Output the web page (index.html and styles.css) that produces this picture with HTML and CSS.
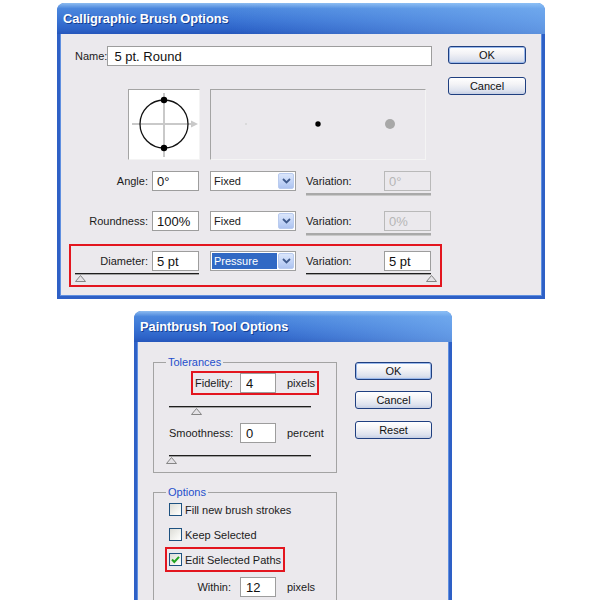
FILE: index.html
```html
<!DOCTYPE html>
<html lang="en">

<head>
	<meta charset="UTF-8">
	<title>Brush Options</title>
	<link rel="stylesheet" href="styles.css">
</head>

<body>
	<div class="dialog brush-dialog">
		<div class="titlebar">Calligraphic Brush Options</div>
		<div class="dialog-body">
			<div class="main">
				<div class="name-row">
					<label for="brushName">Name:</label>
					<input type="text" id="brushName" class="field name-field" value="5 pt. Round">
				</div>
				<div class="preview-row">
					<div class="preview preview-shape">
						<svg width="70" height="69" viewBox="0 0 70 69">
							<line x1="35" y1="3" x2="35" y2="67" stroke="#c9c9c9" stroke-width="2"/>
							<line x1="3" y1="34" x2="63" y2="34" stroke="#c9c9c9" stroke-width="2"/>
							<polygon points="62,30.5 69,34 62,37.5" fill="#c9c9c9"/>
							<circle cx="35" cy="34" r="24" fill="none" stroke="#111" stroke-width="1.3"/>
							<circle cx="35" cy="10" r="3.2" fill="#000"/>
							<circle cx="35" cy="58" r="3.2" fill="#000"/>
						</svg>
					</div>
					<div class="preview preview-strokes">
						<svg width="214" height="69" viewBox="0 0 214 69">
							<circle cx="35" cy="34" r="1" fill="#d4d4d4"/>
							<circle cx="107" cy="34" r="2.7" fill="#000"/>
							<circle cx="179" cy="34" r="5" fill="#a8a8a8"/>
						</svg>
					</div>
				</div>

				<div class="param">
					<div class="pgroup pgroup-left">
						<div class="pline">
							<label for="angle">Angle:</label>
							<input type="text" id="angle" class="field small" value="0°">
						</div>
					</div>
					<div class="select">
						<span class="select-value">Fixed</span>
						<span class="select-arrow"><svg width="9" height="6" viewBox="0 0 9 6"><path d="M1 1 L4.5 4.5 L8 1" fill="none" stroke="#3f5a8c" stroke-width="1.8"/></svg></span>
					</div>
					<div class="pgroup pgroup-right">
						<div class="pline between">
							<span>Variation:</span>
							<input type="text" class="field small" value="0°" disabled>
						</div>
						<div class="track track-off"></div>
					</div>
				</div>

				<div class="param">
					<div class="pgroup pgroup-left">
						<div class="pline">
							<label for="roundness">Roundness:</label>
							<input type="text" id="roundness" class="field small" value="100%">
						</div>
					</div>
					<div class="select">
						<span class="select-value">Fixed</span>
						<span class="select-arrow"><svg width="9" height="6" viewBox="0 0 9 6"><path d="M1 1 L4.5 4.5 L8 1" fill="none" stroke="#3f5a8c" stroke-width="1.8"/></svg></span>
					</div>
					<div class="pgroup pgroup-right">
						<div class="pline between">
							<span>Variation:</span>
							<input type="text" class="field small" value="0%" disabled>
						</div>
						<div class="track track-off"></div>
					</div>
				</div>

				<div class="param param-hl">
					<div class="pgroup pgroup-left">
						<div class="pline">
							<label for="diameter">Diameter:</label>
							<input type="text" id="diameter" class="field small" value="5 pt">
						</div>
						<div class="track"></div>
						<div class="thumb thumb-start"><svg width="11" height="7" viewBox="0 0 11 7"><polygon points="5.5,0.5 10.5,6.5 0.5,6.5" fill="#e4e2e6" stroke="#858585"/></svg></div>
					</div>
					<div class="select">
						<span class="select-value selected">Pressure</span>
						<span class="select-arrow"><svg width="9" height="6" viewBox="0 0 9 6"><path d="M1 1 L4.5 4.5 L8 1" fill="none" stroke="#3f5a8c" stroke-width="1.8"/></svg></span>
					</div>
					<div class="pgroup pgroup-right">
						<div class="pline between">
							<span>Variation:</span>
							<input type="text" class="field small" value="5 pt">
						</div>
						<div class="track"></div>
						<div class="thumb thumb-end"><svg width="11" height="7" viewBox="0 0 11 7"><polygon points="5.5,0.5 10.5,6.5 0.5,6.5" fill="#e4e2e6" stroke="#858585"/></svg></div>
					</div>
				</div>
			</div>
			<div class="buttons">
				<button class="btn btn-default">OK</button>
				<button class="btn">Cancel</button>
			</div>
		</div>
	</div>

	<div class="dialog tool-dialog">
		<div class="titlebar">Paintbrush Tool Options</div>
		<div class="dialog-body tool-body">
			<div class="groups">
				<fieldset class="group">
					<legend>Tolerances</legend>
					<div class="trow trow-hl">
						<label class="tlabel" for="fidelity">Fidelity:</label>
						<input type="text" id="fidelity" class="field tiny" value="4">
						<span class="unit">pixels</span>
					</div>
					<div class="tslider">
						<div class="track"></div>
						<div class="thumb thumb-fidelity"><svg width="11" height="7" viewBox="0 0 11 7"><polygon points="5.5,0.5 10.5,6.5 0.5,6.5" fill="#e4e2e6" stroke="#858585"/></svg></div>
					</div>
					<div class="trow trow-smooth">
						<label class="tlabel" for="smoothness">Smoothness:</label>
						<input type="text" id="smoothness" class="field tiny" value="0">
						<span class="unit">percent</span>
					</div>
					<div class="tslider tslider-last">
						<div class="track"></div>
						<div class="thumb thumb-smooth"><svg width="11" height="7" viewBox="0 0 11 7"><polygon points="5.5,0.5 10.5,6.5 0.5,6.5" fill="#e4e2e6" stroke="#858585"/></svg></div>
					</div>
				</fieldset>

				<fieldset class="group options">
					<legend>Options</legend>
					<div class="checks">
						<label class="check"><span class="box"></span>Fill new brush strokes</label>
						<label class="check"><span class="box"></span>Keep Selected</label>
						<label class="check check-hl"><span class="box"><svg width="11" height="11" viewBox="0 0 11 11"><path d="M2 5.5 L4.3 8 L9 2.8" fill="none" stroke="#21a421" stroke-width="2"/></svg></span>Edit Selected Paths</label>
					</div>
					<div class="trow trow-within">
						<label class="tlabel" for="within">Within:</label>
						<input type="text" id="within" class="field tiny" value="12">
						<span class="unit">pixels</span>
					</div>
				</fieldset>
			</div>
			<div class="buttons tool-buttons">
				<button class="btn btn-default">OK</button>
				<button class="btn">Cancel</button>
				<button class="btn">Reset</button>
			</div>
		</div>
	</div>
</body>

</html>
```

FILE: styles.css
```css
body {
	margin: 0;
	background: #fff;
	font-family: "Liberation Sans", Arial, sans-serif;
	font-size: 11px;
	color: #1b1b1b;
	overflow: hidden;
}

.dialog {
	box-sizing: border-box;
	background: #ebe9ed;
	border: 3px solid #2e60c6;
	border-top: 0;
	border-radius: 8px 8px 0 0;
	box-shadow: inset 1px 0 0 #5f8fe0, inset -1px 0 0 #5f8fe0, inset 0 -1px 0 #5f8fe0;
}

.brush-dialog {
	width: 488px;
	margin: 3px 0 0 57px;
}

.tool-dialog {
	width: 318px;
	margin: 12px 0 0 134px;
	padding-bottom: 30px;
}

.titlebar {
	margin: 0 -3px;
	height: 31px;
	line-height: 31px;
	padding-left: 6px;
	border-radius: 7px 7px 0 0;
	background:
		linear-gradient(to right, rgba(140, 195, 250, 0) 35%, rgba(140, 195, 250, 0.55)),
		linear-gradient(#8dbcf0, #4a86dd 18%, #3a74d4 55%, #2d63c8 85%, #2556bb);
	color: #fff;
	font-weight: bold;
	font-size: 12.8px;
	text-shadow: 1px 1px 0 #143f94;
}

.dialog-body {
	display: flex;
	padding: 12px 16px 9px 9px;
}

.main {
	width: 373px;
}

.field {
	box-sizing: border-box;
	height: 20px;
	border: 1px solid #9d9d9d;
	background: #fff;
	font-family: "Liberation Sans", Arial, sans-serif;
	font-size: 13px;
	color: #111;
	padding: 0 4px;
	margin: 0;
}

.field:disabled {
	background: #ebe9ed;
	border-color: #b9b9b9;
	color: #b6b6b6;
}

.name-row {
	display: flex;
	align-items: center;
	height: 20px;
	padding-left: 6px;
}

.name-field {
	width: 325px;
	margin-left: auto;
	margin-right: 10px;
	padding-left: 6px;
}

.preview-row {
	display: flex;
	margin-top: 23px;
	height: 71px;
}

.preview {
	box-sizing: border-box;
	border: 1px solid #a4a4a4;
	border-right-color: #f4f4f4;
	border-bottom-color: #f4f4f4;
}

.preview svg {
	display: block;
}

.preview-shape {
	width: 72px;
	margin-left: 59px;
	background: #fff;
}

.preview-strokes {
	width: 216px;
	margin-left: 10px;
}

.param {
	box-sizing: border-box;
	display: flex;
	align-items: flex-start;
	height: 40px;
	border: 2px solid transparent;
	padding: 5px 9px 0 4px;
}

.preview-row + .param {
	margin-top: 4px;
}

.param-hl {
	height: 43px;
	border-color: #e3161f;
}

.pgroup-left {
	width: 124px;
}

.pgroup-right {
	width: 125px;
	margin-left: 10px;
}

.pline {
	display: flex;
	align-items: center;
	justify-content: flex-end;
	gap: 4px;
	height: 20px;
}

.pline.between {
	justify-content: space-between;
}

.small {
	width: 47px;
}

.track {
	height: 0;
	margin-top: 2px;
	border-top: 1px solid #1e1e1e;
	border-bottom: 1px solid #a2a2a2;
}

.track-off {
	border-top: 2px solid #a9a9a9;
	border-bottom: 1px solid #c9c9c9;
}

.thumb svg {
	display: block;
}

.thumb-end {
	margin-left: 120px;
}

.select {
	box-sizing: border-box;
	display: flex;
	width: 86px;
	height: 20px;
	margin-left: 11px;
	border: 1px solid #a0a0a0;
	background: #fff;
	padding: 1px;
}

.select-value {
	flex: 1;
	line-height: 16px;
	padding-left: 2px;
}

.select-value.selected {
	background: #3169c4;
	color: #fff;
	margin-right: 1px;
}

.select-arrow {
	box-sizing: border-box;
	width: 16px;
	display: flex;
	align-items: center;
	justify-content: center;
	border: 1px solid #b9cbef;
	border-radius: 2px;
	background: linear-gradient(#dbe6fb, #c0d2f6 60%, #adc3f0);
}

.buttons {
	display: flex;
	flex-direction: column;
	gap: 13px;
	margin-left: 6px;
}

.btn {
	box-sizing: border-box;
	width: 78px;
	height: 18px;
	padding: 0;
	border: 1px solid #1f3f80;
	border-radius: 3px;
	background: linear-gradient(#ffffff, #f3f3f6 40%, #dde2ee 80%, #c6cfe4);
	font-family: "Liberation Sans", Arial, sans-serif;
	font-size: 11px;
	color: #111;
}

.btn-default {
	box-shadow: inset 0 0 0 1px #9ab9ec;
}

/* paintbrush dialog */

.tool-body {
	padding: 13px 17px 0 16px;
}

.groups {
	width: 184px;
}

.group {
	margin: 0;
	padding: 0 0 8px 0;
	border: 1px solid #a3a3a3;
}

.group legend {
	margin-left: 12px;
	padding: 0 2px;
	line-height: 14px;
	color: #1f4fcc;
}

.options {
	margin-top: 12px;
	padding-bottom: 30px;
}

.trow {
	display: flex;
	align-items: center;
	height: 20px;
}

.tlabel {
	width: 62px;
	text-align: right;
	white-space: nowrap;
}

.tiny {
	width: 36px;
	margin-left: 9px;
	padding-left: 5px;
}

.unit {
	margin-left: 11px;
}

.trow-hl {
	width: fit-content;
	margin: 2px 0 0 37px;
	border: 2px solid #e3161f;
	padding: 0 2px;
}

.trow-hl .tlabel {
	width: 36px;
}

.trow-smooth,
.trow-within {
	padding-left: 15px;
}

.trow-smooth {
	margin-top: 8px;
}

.trow-within {
	margin-top: 5px;
}

.tslider {
	width: 142px;
	margin: 11px 0 0 15px;
}

.tslider .track {
	margin-top: 0;
}

.tslider-last {
	margin-top: 12px;
}

.thumb-fidelity {
	margin-left: 22px;
}

.thumb-smooth {
	margin-left: -3px;
}

.checks {
	margin-top: -2px;
}

.check {
	display: flex;
	align-items: center;
	width: fit-content;
	border: 2px solid transparent;
	padding: 4px 2px;
	margin-left: 11px;
}

.check-hl {
	border-color: #e3161f;
}

.box {
	box-sizing: border-box;
	display: flex;
	align-items: center;
	justify-content: center;
	width: 13px;
	height: 13px;
	margin-right: 3px;
	border: 1px solid #1d5180;
	background: linear-gradient(135deg, #dcdcd6, #f6f6f3 70%, #fff);
}

.tool-buttons {
	margin: 7px 0 0 18px;
	gap: 11px;
	width: 77px;
}

.tool-buttons .btn {
	width: 77px;
}

.tool-buttons .btn + .btn + .btn {
	margin-top: 1px;
}
```
